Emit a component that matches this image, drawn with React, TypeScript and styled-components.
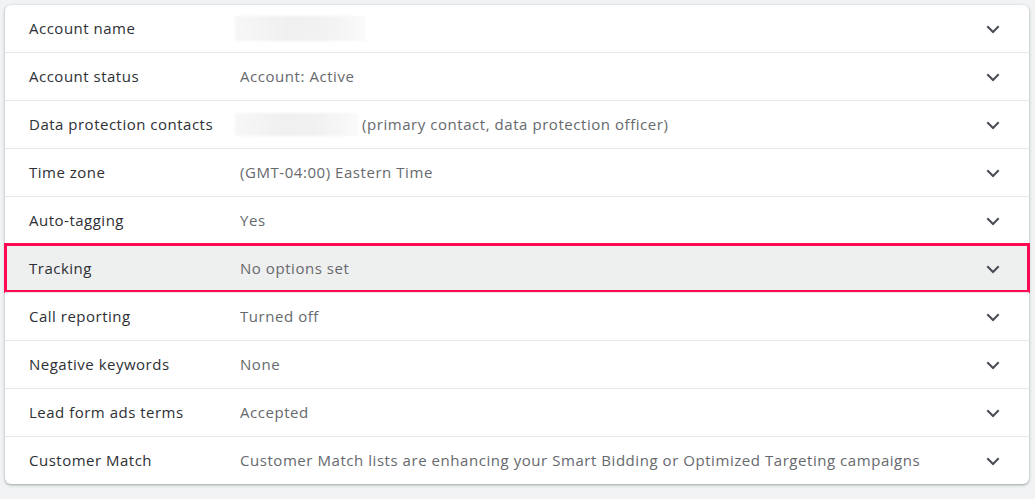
import React from "react";
import styled, { createGlobalStyle } from "styled-components";

const Global = createGlobalStyle`
  html, body { margin: 0; padding: 0; background: #f1f3f4; }
  body { font-family: "Open Sans", Roboto, Arial, sans-serif; }
`;

const Page = styled.div`
  padding: 5px 6px 14px 5px;
  width: 1035px;
  height: 499px;
  box-sizing: border-box;
`;

const Card = styled.div`
  background: #fff;
  border-radius: 6px;
  box-shadow: 0 1px 2px rgba(60, 64, 67, 0.3), 0 1px 3px 1px rgba(60, 64, 67, 0.12);
  display: flex;
  flex-direction: column;
`;

const Row = styled.div<{ $highlight?: boolean; $first?: boolean }>`
  position: relative;
  height: 47px;
  display: grid;
  grid-template-columns: 211px 1fr 24px;
  align-items: center;
  padding: 0 24px;
  border-top: ${(p) => (p.$first ? "none" : "1px solid #e8e9eb")};
  background: ${(p) => (p.$highlight ? "#eeefef" : "transparent")};
  border-radius: ${(p) => (p.$first ? "6px 6px 0 0" : "0")};
`;

const Highlight = styled.div`
  position: absolute;
  top: -2px;
  bottom: -1px;
  left: -1px;
  right: -1px;
  border: 3px solid #ff0a52;
  pointer-events: none;
`;

const Label = styled.div`
  font-size: 15px;
  line-height: 20px;
  margin-top: -2px;
  letter-spacing: 0.5px;
  color: #2d3034;
  white-space: nowrap;
`;

const Value = styled.div`
  font-size: 15px;
  line-height: 20px;
  letter-spacing: 0.55px;
  color: #66696d;
  display: flex;
  align-items: center;
  white-space: nowrap;
`;

const ValueText = styled.span`
  margin-top: -2px;
`;

const Redacted = styled.span<{ $w: number; $h: number }>`
  display: inline-block;
  width: ${(p) => p.$w}px;
  height: ${(p) => p.$h}px;
  margin-left: -5px;
  margin-right: 4px;
  background: linear-gradient(90deg, #f7f7f7 0%, #f0f0f0 40%, #f2f2f2 70%, #fafafa 100%);
  filter: blur(1px);
`;

const Chevron = () => (
  <svg width="24" height="24" viewBox="0 0 24 24" fill="none" stroke="#474b52" strokeWidth="2">
    <path d="M6.3 9.3 12 15l5.7-5.7" />
  </svg>
);

type Item = { label: string; value: React.ReactNode; highlight?: boolean };

const items: Item[] = [
  { label: "Account name", value: <Redacted $w={130} $h={25} /> },
  { label: "Account status", value: <ValueText>Account: Active</ValueText> },
  {
    label: "Data protection contacts",
    value: (
      <>
        <Redacted $w={123} $h={23} />
        <ValueText>(primary contact, data protection officer)</ValueText>
      </>
    ),
  },
  { label: "Time zone", value: <ValueText>(GMT-04:00) Eastern Time</ValueText> },
  { label: "Auto-tagging", value: <ValueText>Yes</ValueText> },
  { label: "Tracking", value: <ValueText>No options set</ValueText>, highlight: true },
  { label: "Call reporting", value: <ValueText>Turned off</ValueText> },
  { label: "Negative keywords", value: <ValueText>None</ValueText> },
  { label: "Lead form ads terms", value: <ValueText>Accepted</ValueText> },
  {
    label: "Customer Match",
    value: (
      <ValueText>
        Customer Match lists are enhancing your Smart Bidding or Optimized Targeting campaigns
      </ValueText>
    ),
  },
];

export default function App() {
  return (
    <>
      <Global />
      <Page>
        <Card>
          {items.map((it, i) => (
            <Row key={it.label} $first={i === 0} $highlight={it.highlight}>
              <Label>{it.label}</Label>
              <Value>{it.value}</Value>
              <Chevron />
              {it.highlight && <Highlight />}
            </Row>
          ))}
        </Card>
      </Page>
    </>
  );
}
